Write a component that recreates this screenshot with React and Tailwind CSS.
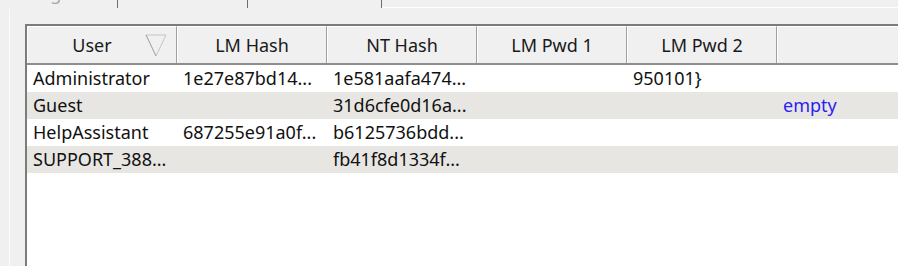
import React from "react";

const columns = ["User", "LM Hash", "NT Hash", "LM Pwd 1", "LM Pwd 2"];

const rows = [
  { user: "Administrator", lm: "1e27e87bd14...", nt: "1e581aafa474...", pwd1: "", pwd2: "950101}", extra: "" },
  { user: "Guest", lm: "", nt: "31d6cfe0d16a...", pwd1: "", pwd2: "", extra: "empty" },
  { user: "HelpAssistant", lm: "687255e91a0f...", nt: "b6125736bdd...", pwd1: "", pwd2: "", extra: "" },
  { user: "SUPPORT_388...", lm: "", nt: "fb41f8d1334f...", pwd1: "", pwd2: "", extra: "" },
];

function Tab({ label, width, active }) {
  return (
    <div
      className={`h-full flex justify-center border-r border-[#6e6e6e] ${width}`}
    >
      <span
        className={`mt-[-19px] leading-[24px] whitespace-nowrap ${
          active ? "font-bold text-[#111]" : "text-[#a8a8a8]"
        }`}
      >
        {label}
      </span>
    </div>
  );
}

function HeaderCell({ label, sorted }) {
  return (
    <div className="w-[150px] shrink-0 h-full flex items-center border-r border-r-[#a0a0a0] border-l border-l-white border-t border-t-white">
      <span className="flex-1 text-center">{label}</span>
      {sorted && (
        <svg width="22" height="23" viewBox="0 0 22 23" className="mr-[9px] ml-[-11px]">
          <path d="M1 1 L21 1 L11 22 Z" fill="none" stroke="#c4c4c4" strokeWidth="1" />
          <path d="M1 1 L11 22" fill="none" stroke="#a8a8a8" strokeWidth="1" />
        </svg>
      )}
    </div>
  );
}

function Cell({ children, blue }) {
  return (
    <div
      className={`w-[150px] shrink-0 pl-[6px] whitespace-nowrap overflow-hidden ${
        blue ? "text-[#2a22f0]" : "text-[#111]"
      }`}
    >
      {children}
    </div>
  );
}

export default function App() {
  return (
    <div
      className="w-[898px] h-[266px] overflow-hidden bg-[#f0f0f0] text-[18px] flex flex-col"
      style={{ fontFamily: '"Noto Sans", "Open Sans", sans-serif' }}
    >
      {/* Tabs, mostly scrolled out of view */}
      <div className="h-[8px] flex overflow-hidden shrink-0">
        <Tab label="Progress" width="w-[118px]" />
        <Tab label="Statistics" width="w-[130px]" active />
        <Tab label="Preferences" width="w-[134px]" />
        <div className="flex-1 border-b border-white" />
      </div>

      {/* Tab pane */}
      <div className="flex-1 flex pl-[9px] pt-[1px]">
        <div className="flex-1 flex border-l border-[#fbfbfb] pl-[15px] pt-[15px]">
          <div className="flex-1 flex flex-col bg-white border-t-2 border-l-2 border-[#7c7c7c]">
            {/* Header */}
            <div className="h-[39px] shrink-0 flex bg-[#f0f0f0] border-b-2 border-[#8e8e8e] text-[#1a1a1a]">
              {columns.map((c, i) => (
                <HeaderCell key={c} label={c} sorted={i === 0} />
              ))}
              <div className="flex-1 border-l border-white border-t border-t-white" />
            </div>

            {/* Rows */}
            {rows.map((r, i) => (
              <div
                key={r.user}
                className={`h-[27px] shrink-0 flex items-center ${
                  i % 2 === 1 ? "bg-[#e8e6e3]" : "bg-white"
                }`}
              >
                <Cell>{r.user}</Cell>
                <Cell>{r.lm}</Cell>
                <Cell>{r.nt}</Cell>
                <Cell>{r.pwd1}</Cell>
                <Cell>{r.pwd2}</Cell>
                <div className="flex-1 pl-[6px] text-[#2a22f0] whitespace-nowrap">
                  {r.extra}
                </div>
              </div>
            ))}
          </div>
        </div>
      </div>
    </div>
  );
}
